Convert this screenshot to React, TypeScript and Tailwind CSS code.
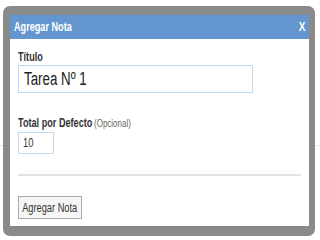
import React, { useState } from "react";

// The screenshot is horizontally squeezed, so text is drawn in Arial metrics
// and narrowed with scale-x.
const FONT = "font-['Liberation_Sans',Arial,sans-serif]";
const NARROW = "inline-block origin-left scale-x-[0.73] whitespace-nowrap";

const AgregarNotaDialog = () => {
  const [titulo, setTitulo] = useState("Tarea Nº 1");
  const [total, setTotal] = useState("10");

  return (
    <div className="absolute left-[3px] top-[6px] w-[312px] h-[230px] rounded-[7px] bg-[#8a8a8a] pt-[9px] pl-[7px] pr-[6px] pb-[10px]">
      {/* Header */}
      <div className="flex h-[24px] items-center justify-between bg-[#6396cf] pl-[4px] pr-[3px]">
        <span className={`${NARROW} text-[12.5px] font-bold text-white`}>Agregar Nota</span>
        <span className="inline-block scale-x-[0.8] text-[12.5px] font-bold text-white">X</span>
      </div>

      {/* Body */}
      <div className="flex h-[187px] flex-col bg-white px-[8px] pt-[11px]">
        <label className="shrink-0 text-[12.5px] font-bold leading-[14px] text-[#333]">
          <span className={NARROW}>Título</span>
        </label>
        <div className="mt-[1px] flex h-[28px] w-[235px] shrink-0 items-center border border-[#c3d9ee] px-[5px]">
          <input
            value={titulo}
            onChange={(e) => setTitulo(e.target.value)}
            className="w-[320px] shrink-0 origin-left scale-x-[0.74] bg-transparent text-[18px] text-[#222] outline-none"
          />
        </div>

        <div className="mt-[22px] shrink-0 whitespace-nowrap leading-[14px]">
          <span className={`${NARROW} text-[12.5px] font-bold text-[#333]`}>Total por Defecto</span>
          <span className="ml-[-26px] inline-block origin-left scale-x-[0.8] text-[10px] text-[#666]">(Opcional)</span>
        </div>
        <div className="mt-[1px] flex h-[22px] w-[36px] shrink-0 items-center overflow-hidden border border-[#c3d9ee] px-[4px]">
          <input
            value={total}
            onChange={(e) => setTotal(e.target.value)}
            className="w-[40px] shrink-0 origin-left scale-x-[0.78] bg-transparent text-[12px] text-[#333] outline-none"
          />
        </div>

        <hr className="mt-[20px] w-[283px] shrink-0 border-t-2 border-[#e2e2e2]" />

        <div className="mt-[20px] shrink-0">
          <button className="flex h-[23px] w-[64px] items-center justify-center overflow-hidden whitespace-nowrap border border-[#aaa] bg-[#f6f6f6] text-[12px] text-[#333]">
            <span className="inline-block scale-x-[0.77]">Agregar Nota</span>
          </button>
        </div>
      </div>
    </div>
  );
};

export default function App() {
  return (
    <div className={`relative h-[240px] w-[320px] bg-white ${FONT}`}>
      {/* page behind the dialog */}
      <div className="h-[146px] border-b border-dashed border-[#e4e4e4]" />
      <AgregarNotaDialog />
    </div>
  );
}
